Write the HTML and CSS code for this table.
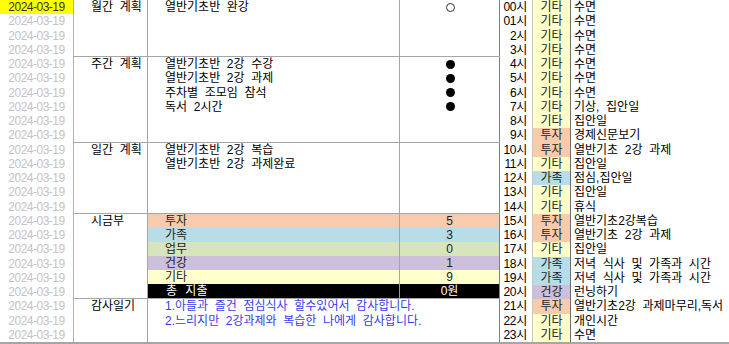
FILE: index.html
```html
<!DOCTYPE html>
<html lang="ko">
<head>
<meta charset="utf-8">
<title>2024-03-19 계획표</title>
<link rel="stylesheet" href="styles.css">
</head>
<body>
<div class="sheet">
  <div class="dates">
    <div class="date today">2024-03-19</div>
    <div class="date">2024-03-19</div><div class="date">2024-03-19</div><div class="date">2024-03-19</div>
    <div class="date">2024-03-19</div><div class="date">2024-03-19</div><div class="date">2024-03-19</div>
    <div class="date">2024-03-19</div><div class="date">2024-03-19</div><div class="date">2024-03-19</div>
    <div class="date">2024-03-19</div><div class="date">2024-03-19</div><div class="date">2024-03-19</div>
    <div class="date">2024-03-19</div><div class="date">2024-03-19</div><div class="date">2024-03-19</div>
    <div class="date">2024-03-19</div><div class="date">2024-03-19</div><div class="date">2024-03-19</div>
    <div class="date">2024-03-19</div><div class="date">2024-03-19</div><div class="date">2024-03-19</div>
    <div class="date">2024-03-19</div><div class="date">2024-03-19</div>
  </div>

  <div class="plans">
    <section class="sec sec-month">
      <div class="label">월간 계획</div>
      <div class="content"><span class="line">열반기초반 완강</span></div>
      <div class="marks"><span class="mark"><i class="dot open"></i></span></div>
    </section>

    <section class="sec sec-week">
      <div class="label">주간 계획</div>
      <div class="content">
        <span class="line">열반기초반 2강 수강</span>
        <span class="line">열반기초반 2강 과제</span>
        <span class="line">주차별 조모임 참석</span>
        <span class="line">독서 2시간</span>
      </div>
      <div class="marks">
        <span class="mark"><i class="dot"></i></span>
        <span class="mark"><i class="dot"></i></span>
        <span class="mark"><i class="dot"></i></span>
        <span class="mark"><i class="dot"></i></span>
      </div>
    </section>

    <section class="sec sec-day">
      <div class="label">일간 계획</div>
      <div class="content">
        <span class="line">열반기초반 2강 복습</span>
        <span class="line">열반기초반 2강 과제완료</span>
      </div>
      <div class="marks"></div>
    </section>

    <section class="sec sec-money">
      <div class="label">시금부</div>
      <div class="ledger">
        <div class="lrow c-invest"><span class="lname">투자</span><span class="lval">5</span></div>
        <div class="lrow c-family"><span class="lname">가족</span><span class="lval">3</span></div>
        <div class="lrow c-work"><span class="lname">업무</span><span class="lval">0</span></div>
        <div class="lrow c-health"><span class="lname">건강</span><span class="lval">1</span></div>
        <div class="lrow c-etc"><span class="lname">기타</span><span class="lval">9</span></div>
        <div class="lrow total"><span class="lname">총 지출</span><span class="lval">0원</span></div>
      </div>
    </section>

    <section class="sec sec-thanks">
      <div class="label">감사일기</div>
      <div class="content wide">
        <span class="line">1.아들과 즐건 점심식사 할수있어서 감사합니다.</span>
        <span class="line">2.느리지만 2강과제와 복습한 나에게 감사합니다.</span>
      </div>
    </section>
  </div>

  <div class="hours">
    <span class="hr">00시</span><span class="cat c-etc">기타</span><span class="act">수면</span>
    <span class="hr">01시</span><span class="cat c-etc">기타</span><span class="act">수면</span>
    <span class="hr">2시</span><span class="cat c-etc">기타</span><span class="act">수면</span>
    <span class="hr">3시</span><span class="cat c-etc">기타</span><span class="act">수면</span>
    <span class="hr">4시</span><span class="cat c-etc">기타</span><span class="act">수면</span>
    <span class="hr">5시</span><span class="cat c-etc">기타</span><span class="act">수면</span>
    <span class="hr">6시</span><span class="cat c-etc">기타</span><span class="act">수면</span>
    <span class="hr">7시</span><span class="cat c-etc">기타</span><span class="act">기상, 집안일</span>
    <span class="hr">8시</span><span class="cat c-etc">기타</span><span class="act">집안일</span>
    <span class="hr">9시</span><span class="cat c-invest">투자</span><span class="act">경제신문보기</span>
    <span class="hr">10시</span><span class="cat c-invest">투자</span><span class="act">열반기초 2강 과제</span>
    <span class="hr">11시</span><span class="cat c-etc">기타</span><span class="act">집안일</span>
    <span class="hr">12시</span><span class="cat c-family">가족</span><span class="act">점심,집안일</span>
    <span class="hr">13시</span><span class="cat c-etc">기타</span><span class="act">집안일</span>
    <span class="hr">14시</span><span class="cat c-etc">기타</span><span class="act">휴식</span>
    <span class="hr">15시</span><span class="cat c-invest">투자</span><span class="act">열반기초2강복습</span>
    <span class="hr">16시</span><span class="cat c-invest">투자</span><span class="act">열반기초 2강 과제</span>
    <span class="hr">17시</span><span class="cat c-etc">기타</span><span class="act">집안일</span>
    <span class="hr">18시</span><span class="cat c-family">가족</span><span class="act">저녁 식사 및 가족과 시간</span>
    <span class="hr">19시</span><span class="cat c-family">가족</span><span class="act">저녁 식사 및 가족과 시간</span>
    <span class="hr">20시</span><span class="cat c-health">건강</span><span class="act">런닝하기</span>
    <span class="hr">21시</span><span class="cat c-invest">투자</span><span class="act">열반기초2강 과제마무리,독서</span>
    <span class="hr">22시</span><span class="cat c-etc">기타</span><span class="act">개인시간</span>
    <span class="hr">23시</span><span class="cat c-etc">기타</span><span class="act">수면</span>
  </div>
</div>
</body>
</html>
```
FILE: styles.css
```css
html, body {
  margin: 0;
  padding: 0;
  background: #ffffff;
}

body {
  font-family: "Liberation Sans", "Noto Sans CJK KR", sans-serif;
  font-size: 12px;
  color: #000000;
  word-spacing: 3.3px;
}

.sheet {
  display: flex;
  width: 729px;
  height: 344px;
  box-sizing: border-box;
  border-bottom: 2px solid #a6a6a6;
  overflow: hidden;
}

/* date column */
.dates {
  width: 74px;
  flex: none;
  box-sizing: border-box;
  border-right: 1px solid #b0b0b0;
  display: grid;
  grid-auto-rows: 14.25px;
}

.date {
  font-size: 12px;
  letter-spacing: -0.5px;
  word-spacing: 0;
  line-height: 14.25px;
  text-align: center;
  color: #c4c4c4;
}

.date.today {
  background: #ffff00;
  color: #333333;
}

/* plans block */
.plans {
  width: 426px;
  flex: none;
  display: flex;
  flex-direction: column;
}

.sec {
  display: grid;
  grid-template-columns: 74px 252px 100px;
  box-sizing: border-box;
  border-bottom: 1px solid #a6a6a6;
}

.sec-month { height: 57px; }
.sec-week { height: 85.5px; }
.sec-day { height: 71.25px; }
.sec-money { height: 85.5px; }
.sec-thanks { height: 42.75px; border-bottom: none; }

.label {
  box-sizing: border-box;
  border-right: 1px solid #a6a6a6;
  padding-left: 17px;
  line-height: 14.25px;
  white-space: nowrap;
}

.content {
  box-sizing: border-box;
  border-right: 1px solid #a6a6a6;
  padding-left: 17px;
  display: flex;
  flex-direction: column;
  white-space: nowrap;
}

.content.wide {
  grid-column: span 2;
  border-right: 1px solid #808080;
  color: #3a3aee;
}

.line {
  display: block;
  line-height: 14.25px;
  height: 14.25px;
}

.marks {
  box-sizing: border-box;
  border-right: 1px solid #808080;
  display: flex;
  flex-direction: column;
}

.mark {
  height: 14.25px;
  display: flex;
  align-items: center;
  justify-content: center;
  padding-left: 1px;
}

.dot {
  display: block;
  width: 9px;
  height: 9px;
  border-radius: 50%;
  background: #000000;
}

.dot.open {
  width: 7px;
  height: 7px;
  background: #ffffff;
  border: 1.2px solid #333333;
}

/* money ledger */
.ledger {
  grid-column: span 2;
  display: flex;
  flex-direction: column;
  box-sizing: border-box;
  border-right: 1px solid #808080;
}

.lrow {
  flex: 1;
  display: grid;
  grid-template-columns: 252px 1fr;
  line-height: 14px;
}

.lname {
  box-sizing: border-box;
  border-right: 1px solid #a6a6a6;
  padding-left: 17px;
  color: #222222;
}

.lval {
  text-align: center;
  color: #222222;
}

.lrow.total {
  background: #000000;
}

.lrow.total .lname,
.lrow.total .lval {
  color: #ffffff;
}

.lrow.total .lname {
  border-right-color: #9a9a9a;
  padding-left: 18px;
  word-spacing: 5px;
}

/* category colours */
.c-invest { background: #f8cbad; }
.c-family { background: #b7dee8; }
.c-work { background: #d8e4bc; }
.c-health { background: #ccc0da; }
.c-etc { background: #ffffcc; }

/* hourly log */
.hours {
  flex: 1;
  display: grid;
  grid-template-columns: 32px 39px 1fr;
  grid-auto-rows: 14.25px;
  line-height: 14.25px;
  white-space: nowrap;
}

.hr {
  text-align: right;
  padding-right: 5px;
  word-spacing: 0;
  letter-spacing: -0.3px;
}

.cat {
  box-sizing: border-box;
  border-left: 1px solid #c8c8c8;
  border-right: 1px solid #6e6e6e;
  text-align: center;
  color: #222222;
}

.act {
  padding-left: 3px;
  overflow: hidden;
}
```
